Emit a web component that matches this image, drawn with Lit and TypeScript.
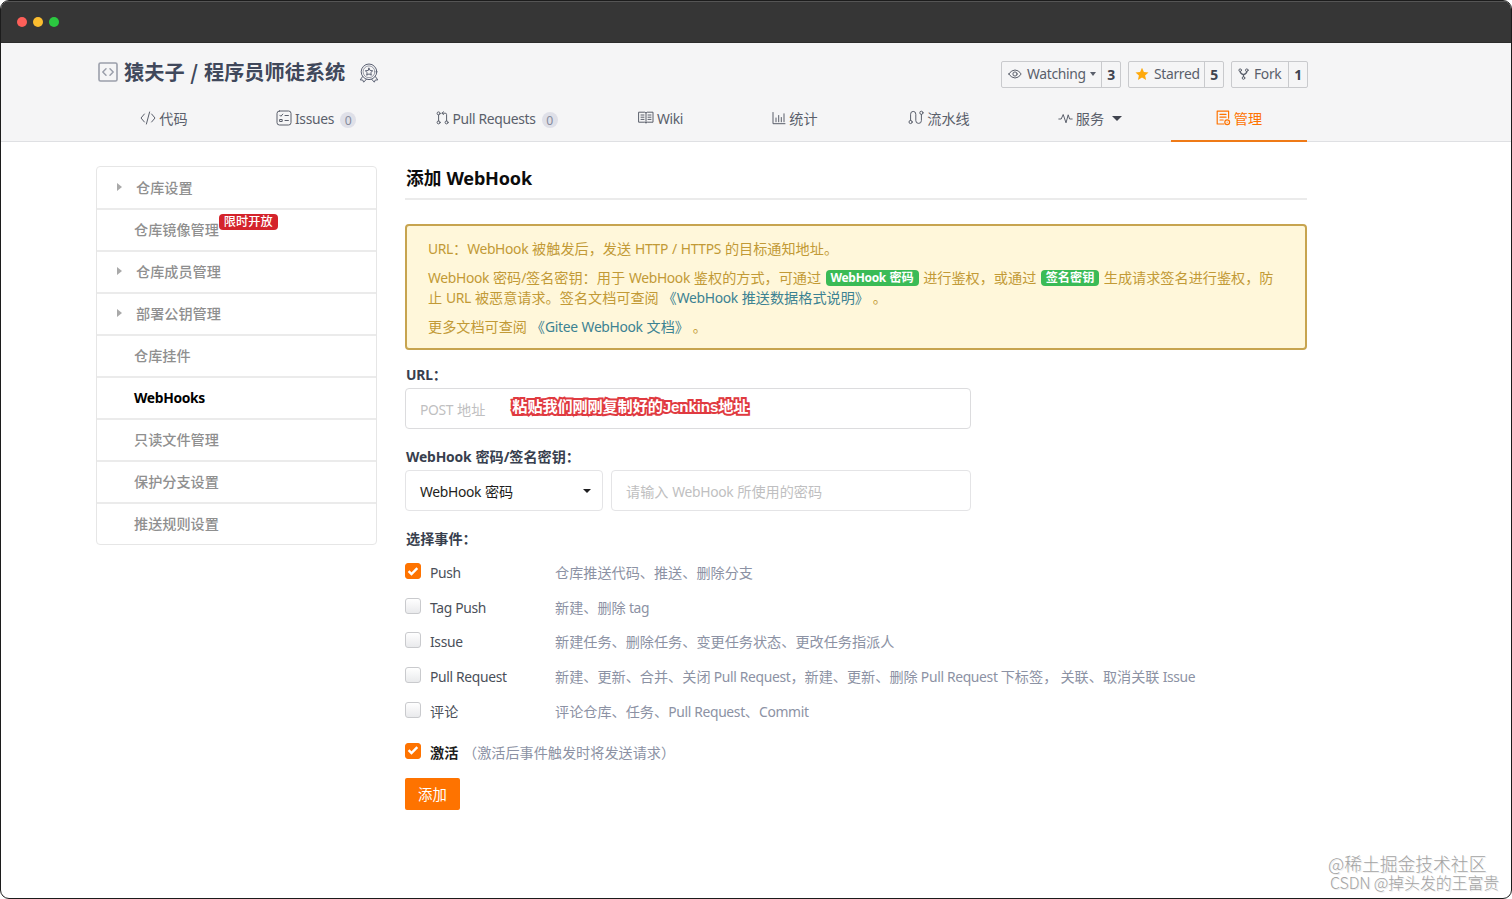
import { LitElement, html, css, svg, nothing } from "lit";
import { customElement } from "lit/decorators.js";
import { classMap } from "lit/directives/class-map.js";

/** Wraps Latin runs so they can be sized independently of the Chinese glyphs. */
const mix = (text: string) =>
  text
    .split(/([\x21-\x7e]+(?: [\x21-\x7e]+)*)/)
    .map((part, i) => (i % 2 ? html`<span class="la">${part}</span>` : part));

const icon = (w: number, h: number, body: unknown) =>
  html`<svg class="ico" width=${w} height=${h} viewBox="0 0 ${w} ${h}" fill="none" stroke="currentColor" stroke-width="1" stroke-linecap="round" stroke-linejoin="round">${body}</svg>`;

const icons = {
  repo: icon(20, 20, svg`<rect x="1" y="1" width="18" height="18" rx="1.5" stroke-width="1.6"/><path stroke-width="1.5" d="M8 6.8 4.8 10 8 13.2M12 6.8l3.2 3.2-3.2 3.2"/>`),
  medal: icon(20, 20, svg`<circle cx="10" cy="8.8" r="7.8"/><circle cx="10" cy="8.8" r="5.9" stroke-width=".6"/><path d="m10 5.2 1.1 2.3 2.6.3-1.9 1.8.5 2.6-2.3-1.3-2.3 1.3.5-2.6-1.9-1.8 2.6-.3zM3.6 13.6 1.2 16.9l2.5.1 1 2.2 2.7-3M16.4 13.6l2.4 3.3-2.5.1-1 2.2-2.7-3"/>`),
  code: icon(16, 14, svg`<path d="M4.4 3 1 7l3.4 4M11.6 3 15 7l-3.4 4M9.6 1 6.4 13"/>`),
  issues: icon(16, 16, svg`<rect x="1" y="1" width="14" height="14" rx="2.4"/><path d="m3.8 5.2 1.1 1.1 1.9-2.2M9 5.5h3.4M9 10.5h3.4M4 9.5h2.2v2H4z"/>`),
  pull: icon(13, 14, svg`<circle cx="2.6" cy="2.4" r="1.5"/><circle cx="2.6" cy="11.4" r="1.5"/><circle cx="10.6" cy="11.4" r="1.5"/><path d="M2.6 4v6M6 2.2h3.2q1.4 0 1.4 1.4V10M7.5.8 6 2.2l1.5 1.5"/>`),
  wiki: icon(16, 13, svg`<path d="M1 1.2h5.8L8 2l1.2-.8H15v10H9.2L8 12l-1.2-.8H1zM8 2v9.8M3 4h3M3 6.2h3M3 8.4h3M10 4h3M10 6.2h3M10 8.4h3"/>`),
  stats: icon(14, 14, svg`<path d="M1 1.5v11.2h12M4 7v3.8M6.7 4.5v6.3M9.3 6.5v4.3M12 2.8v8"/>`),
  flow: icon(16, 15, svg`<circle cx="2.6" cy="12" r="1.6"/><circle cx="13.4" cy="2.8" r="1.6"/><path d="M2.6 10.4V4.2q0-2.8 2.6-2.8t2.6 2.8v6.4q0 2.8 2.8 2.8t2.8-2.8V4.4"/>`),
  pulse: icon(15, 12, svg`<path d="M.8 7h2.4l2-4.5L8 10.8l2.2-8L11.6 7h2.6"/>`),
  manage: icon(15, 16, svg`<path stroke-width="1.2" d="M7.8 14H1.2V1.2h11.4v7M4 4.4h6M4 7.2h6M4 10h3.2"/><circle stroke-width="1.2" cx="11.2" cy="12.2" r="2.4"/><path d="M11.2 12.1v.2"/>`),
  eye: icon(14, 12, svg`<path d="M.8 6Q3.2 2 7 2t6.2 4Q10.8 10 7 10T.8 6z"/><circle cx="7" cy="6" r="2.1"/>`),
  star: html`<svg class="ico" width="14" height="14" viewBox="0 0 14 14"><path fill="#fea90c" d="m7 .7 1.9 4.2 4.6.5-3.4 3 1 4.5L7 10.6l-4.1 2.3 1-4.5-3.4-3 4.6-.5z"/></svg>`,
  fork: icon(11, 12, svg`<circle cx="2.2" cy="2.2" r="1.3"/><circle cx="8.8" cy="2.2" r="1.3"/><circle cx="5.5" cy="10" r="1.3"/><path stroke-width="1.3" d="M2.2 3.6q.2 2 3.3 3 3.1-1 3.3-3M5.5 6.6v2"/>`),
  check: html`<svg width="12" height="11" viewBox="0 0 12 11" fill="none" stroke="#fff" stroke-width="2.4"><path d="m1.6 5.2 2.9 2.9 5.8-6"/></svg>`,
};

const nav = [
  { id: "code", label: "代码", icon: icons.code },
  { id: "issues", label: "Issues", icon: icons.issues, count: "0" },
  { id: "pulls", label: "Pull Requests", icon: icons.pull, count: "0" },
  { id: "wiki", label: "Wiki", icon: icons.wiki },
  { id: "stats", label: "统计", icon: icons.stats },
  { id: "flow", label: "流水线", icon: icons.flow },
  { id: "service", label: "服务", icon: icons.pulse, caret: true },
  { id: "manage", label: "管理", icon: icons.manage, active: true },
];

const menu = [
  { label: "仓库设置", arrow: true },
  { label: "仓库镜像管理", tag: "限时开放" },
  { label: "仓库成员管理", arrow: true },
  { label: "部署公钥管理", arrow: true },
  { label: "仓库挂件" },
  { label: "WebHooks", active: true },
  { label: "只读文件管理" },
  { label: "保护分支设置" },
  { label: "推送规则设置" },
];

const events = [
  { name: "Push", desc: "仓库推送代码、推送、删除分支", on: true },
  { name: "Tag Push", desc: "新建、删除 tag" },
  { name: "Issue", desc: "新建任务、删除任务、变更任务状态、更改任务指派人" },
  { name: "Pull Request", desc: "新建、更新、合并、关闭 Pull Request，新建、更新、删除 Pull Request 下标签， 关联、取消关联 Issue" },
  { name: "评论", desc: "评论仓库、任务、Pull Request、Commit" },
];

@customElement("app-root")
export class AppRoot extends LitElement {
  static styles = css`
    :host { display: block; width: 1512px; height: 899px; background: #fff; }
    * { box-sizing: border-box; }
    .window {
      position: relative; width: 1512px; height: 899px; overflow: hidden;
      border: 1px solid #1c1c1c; border-radius: 9px; background: #fff;
      font: 14.15px/20px "Noto Sans CJK SC", sans-serif; color: #40485b;
      text-spacing-trim: space-all;
    }
    .la { font-family: "Noto Sans", "Noto Sans CJK SC", sans-serif; font-size: .98em; letter-spacing: -.024em; line-height: 1; }
    .titlebar { height: 42px; padding: 15px 16px; display: flex; gap: 6px; background: #363636; border-top: 1px solid #555; border-bottom: 1px solid #2c2c2c; }
    .dot { width: 10px; height: 10px; border-radius: 50%; }
    .red { background: #fd5f59; } .yellow { background: #fbbd2f; } .green { background: #2bc840; }
    .ico { display: block; flex: none; }

    .header { height: 99px; background: #f5f5f6; border-bottom: 1px solid #dfe0e3; padding: 0 203px 0 95px; }
    .headline { display: flex; height: 52px; padding-top: 5px; align-items: center; }
    .headline .repo { color: #9b9fab; margin: 0 6px 0 2px; }
    .name { font-size: 20.2px; font-weight: 700; line-height: 30px; white-space: pre; flex: 1; display: flex; align-items: center; gap: 14px; word-spacing: 1.2px; }
    .medal { color: #5a6072; padding-top: 2px; }
    .actions { display: flex; gap: 7px; margin-top: 5px; }
    .action { display: flex; align-items: center; height: 27px; border: 1px solid #c9cacd; border-radius: 2px; color: #5a5f6b; }
    .action .main { display: flex; align-items: center; height: 100%; flex: 1; padding-left: 6px; }
    .action .ico { margin-right: 5px; }
    .action .num { width: 19px; height: 100%; border-left: 1px solid #c9cacd; text-align: center; font-weight: 700; color: #40444f; line-height: 25px; }
    .watch { width: 120px; } .starred { width: 96px; } .fork { width: 77px; }
    .tri { width: 0; height: 0; border: 3.5px solid transparent; border-top: 4px solid currentColor; border-bottom: 0; margin-left: 4px; }

    .nav { display: grid; height: 47px; grid-template-columns: 136px 168px 194px 133px 136px 152px 156px 136px; }
    .tab { display: flex; align-items: center; justify-content: center; gap: 3px; color: #5a5f6b; border-bottom: 2px solid transparent; height: 47px; padding-top: 2px; }
    .tab.active { color: #fe7300; border-color: #ef7a17; }
    .tab .ico { margin-bottom: 2px; }
    .tab > span { margin-top: -1px; }
    .tab .count { background: #dfe0e8; color: #868b9c; border-radius: 8px; min-width: 16px; height: 16px; margin: 2px 0 0 3px; text-align: center; font-size: 12.5px; line-height: 16px; }
    .tab.service { padding-right: 6px; }
    .tab .tri { border-width: 5px 5px 0; margin-left: 5px; color: #40444f; }

    .body { display: flex; padding: 24px 0 0 95px; gap: 28px; align-items: flex-start; }
    .side { width: 281px; height: 379px; border: 1px solid #e6e6e6; border-radius: 4px; padding-top: 1px; }
    .item { height: 42px; display: flex; align-items: center; padding: 0 0 2px 37px; border-bottom: 2px solid #ebebeb; color: #8f8f8f; font-weight: 500; }
    .item:last-child { border: 0; height: 40px; }
    .item.active { color: #000; font-weight: 700; }
    .item.arrow { padding-left: 20px; }
    .item.arrow::before { content: ""; border: 4px solid transparent; border-left: 5px solid #a9a9a9; border-right: 0; margin: 0 14px 0 0; }
    .tag { background: #d4232b; color: #fff; border-radius: 4px; height: 16px; padding: 0 5px; font-size: 12.2px; line-height: 15px; align-self: flex-start; margin-top: 4px; font-weight: 500; }

    .main-col { width: 902px; }
    h3 { margin: 0; height: 34px; border-bottom: 2px solid #ebebeb; font-size: 17.7px; line-height: 22px; color: #0c0c0c; font-weight: 700; padding-left: 1px; word-spacing: 1px; }
    h3 .la { font-size: 1.02em; letter-spacing: -.01em; }
    .notice { margin-top: 24px; height: 126px; padding: 13px 20px 0 21px; border: 2px solid #c7a44f; border-radius: 4px; background: #fff7da; color: #c29a36; line-height: 19.5px; display: flex; flex-direction: column; gap: 9.5px; white-space: nowrap; word-spacing: .7px; }
    .notice p { margin: 0; }
    .link { color: #3c8292; }
    .green-tag { display: inline-block; vertical-align: 1px; height: 16px; line-height: 15px; padding: 0 5px; border-radius: 4px; background: #3abb56; color: #fff; font-size: 12.2px; font-weight: 700; margin: 0 .5px; }
    .label { font-weight: 700; color: #383f4e; height: 20px; padding-left: 1px; word-spacing: .7px; }
    .label .la, b .la { letter-spacing: -.012em; }
    .url-label { margin: 14px 0 4px; }
    .field { border: 1px solid #dcdcde; border-radius: 4px; height: 41px; display: flex; align-items: center; padding: 1px 14px 0; color: #bfbfc1; background: #fff; word-spacing: .7px; }
    .annot { font: 700 15.2px/20px "Liberation Sans", "Noto Sans CJK SC", sans-serif; color: #fff; -webkit-text-stroke: 4px #e03a40; paint-order: stroke fill; margin: -4px 0 0 27px; letter-spacing: -.15px; }
    .url { width: 566px; margin-bottom: 17px; }
    .pair { display: flex; gap: 8px; margin: 4px 0 17px; }
    .pair .field { height: 41px; border-color: #e4e4e6; }
    .select { width: 198px; justify-content: space-between; }
    .pair .select { color: #1e1e20; padding-right: 11px; }
    .select .tri { border-width: 4px 4px 0; }
    .secret { width: 360px; }
    .row { display: grid; grid-template-columns: 25px 125px 1fr; height: 34.6px; align-items: center; white-space: nowrap; color: #4a4f59; }
    .box { width: 16px; height: 16px; border: 1px solid #c9cacd; border-radius: 3px; background: linear-gradient(#fff, #e9eaec); margin-top: -2px; display: flex; align-items: center; justify-content: center; }
    .box.on { background: #fe7300; border-color: #fe7300; }
    .desc { color: #8c92a4; }
    .events { margin-top: 7px; }
    .enable { margin-top: 6.5px; grid-template-columns: 25px 33px 1fr; }
    .enable b { color: #1e1e20; }
    .submit { margin-top: 9px; width: 55px; height: 32px; border: 0; border-radius: 2px; background: #fe7300; color: #fff; font: 14.4px/32px "Noto Sans CJK SC", sans-serif; padding: 0; display: block; }

    .marks { position: absolute; right: 10px; bottom: 6px; width: 173px; color: #a3a3a3; font-weight: 300; white-space: nowrap; text-shadow: 1px 1px 0 #ededed; }
    .mark1 { font-size: 17.8px; line-height: 20px; }
    .mark2 { font-size: 16px; line-height: 19px; padding-left: 2px; letter-spacing: -.15px; }
  `;

  private box(on?: boolean) {
    return html`<span class=${classMap({ box: true, on: !!on })}>${on ? icons.check : nothing}</span>`;
  }

  render() {
    return html`
      <div class="window">
        <div class="titlebar"><i class="dot red"></i><i class="dot yellow"></i><i class="dot green"></i></div>
        <header class="header">
          <div class="headline">
            <span class="repo">${icons.repo}</span>
            <div class="name"><span>猿夫子 / 程序员师徒系统</span><span class="medal">${icons.medal}</span></div>
            <div class="actions">
              <div class="action watch"><span class="main">${icons.eye}${mix("Watching")}<i class="tri"></i></span><span class="num">${mix("3")}</span></div>
              <div class="action starred"><span class="main">${icons.star}${mix("Starred")}</span><span class="num">${mix("5")}</span></div>
              <div class="action fork"><span class="main">${icons.fork}${mix("Fork")}</span><span class="num">${mix("1")}</span></div>
            </div>
          </div>
          <nav class="nav">
            ${nav.map((n) => html`<div class=${classMap({ tab: true, active: !!n.active, [n.id]: true })}>${n.icon}<span>${mix(n.label)}</span>${n.count ? html`<span class="count">${mix(n.count)}</span>` : nothing}${n.caret ? html`<i class="tri"></i>` : nothing}</div>`)}
          </nav>
        </header>
        <div class="body">
          <aside class="side">
            ${menu.map((m) => html`<div class=${classMap({ item: true, arrow: !!m.arrow, active: !!m.active })}><span>${mix(m.label)}</span>${m.tag ? html`<span class="tag">${m.tag}</span>` : nothing}</div>`)}
          </aside>
          <main class="main-col">
            <h3>${mix("添加 WebHook")}</h3>
            <section class="notice">
              <p>${mix("URL：WebHook 被触发后，发送 HTTP / HTTPS 的目标通知地址。")}</p>
              <p>${mix("WebHook 密码/签名密钥：用于 WebHook 鉴权的方式，可通过 ")}<span class="green-tag">${mix("WebHook 密码")}</span> 进行鉴权，或通过 <span class="green-tag">签名密钥</span> 生成请求签名进行鉴权，防<br />${mix("止 URL 被恶意请求。签名文档可查阅 ")}<span class="link">${mix("《WebHook 推送数据格式说明》")}</span> 。</p>
              <p>更多文档可查阅 <span class="link">${mix("《Gitee WebHook 文档》")}</span> 。</p>
            </section>
            <div class="label url-label">${mix("URL：")}</div>
            <div class="field url"><span>${mix("POST 地址")}</span><span class="annot">粘贴我们刚刚复制好的Jenkins地址</span></div>
            <div class="label">${mix("WebHook 密码/签名密钥：")}</div>
            <div class="pair">
              <div class="field select"><span>${mix("WebHook 密码")}</span><i class="tri"></i></div>
              <div class="field secret"><span>${mix("请输入 WebHook 所使用的密码")}</span></div>
            </div>
            <div class="label">选择事件：</div>
            <div class="events">
              ${events.map((e) => html`<div class="row">${this.box(e.on)}<span>${mix(e.name)}</span><span class="desc">${mix(e.desc)}</span></div>`)}
            </div>
            <div class="row enable">${this.box(true)}<b>激活</b><span class="desc">（激活后事件触发时将发送请求）</span></div>
            <button class="submit">添加</button>
          </main>
        </div>
        <div class="marks"><div class="mark1">@稀土掘金技术社区</div><div class="mark2">CSDN @掉头发的王富贵</div></div>
      </div>
    `;
  }
}
